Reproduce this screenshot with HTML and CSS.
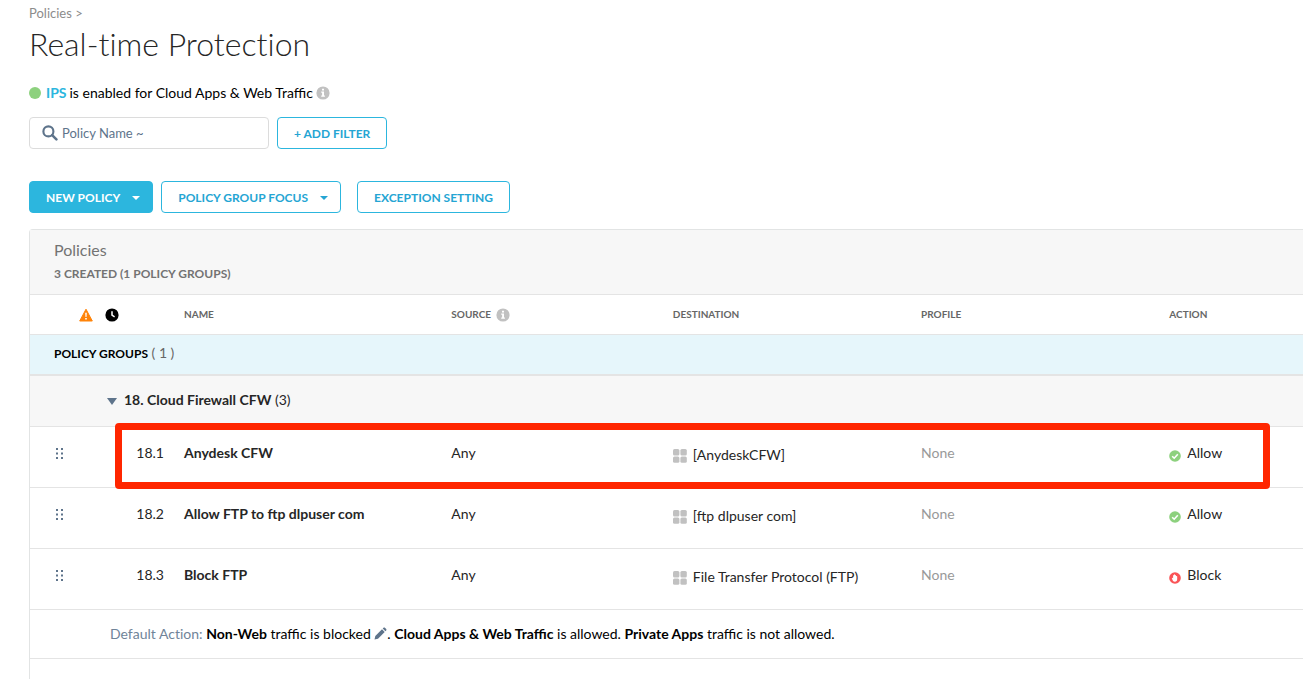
FILE: index.html
```html
<!DOCTYPE html>
<html lang="en">
<head>
<meta charset="utf-8">
<title>Real-time Protection</title>
<link rel="stylesheet" href="styles.css">
</head>
<body>
<svg class="sprite" aria-hidden="true">
  <symbol id="info" viewBox="0 0 14 14"><circle cx="7" cy="7" r="6.6" fill="#c1c1c1"/><path d="M6 2.8h2v1.8H6zM5.2 5.6H8v4h.9v1.2H5.2V9.6h.9V6.8h-.9z" fill="#fff"/></symbol>
  <symbol id="apps" viewBox="0 0 14 14"><g fill="#c1c1c1"><rect width="6.4" height="6.4" rx="1.5"/><rect x="7.4" width="6.4" height="6.4" rx="1.5"/><rect y="7.4" width="6.4" height="6.4" rx="1.5"/><rect x="7.4" y="7.4" width="6.4" height="6.4" rx="1.5"/></g></symbol>
  <symbol id="allow" viewBox="0 0 12 12"><circle cx="6" cy="6" r="5.8" fill="#8dd17e"/><path d="M3.2 6.2l2 2 3.6-4" fill="none" stroke="#fff" stroke-width="1.6"/></symbol>
  <symbol id="block" viewBox="0 0 12 12"><circle cx="6" cy="6" r="5.8" fill="#fa5457"/><path d="M2.800 6c.5-.4 1-.1 1.300.5V3.600c0-.7.8-.7.9 0v-.8c0-.7 1-.7 1 0v.6c.1-.6.9-.6 1 .1v.8c.2-.6 1.200-.5 1.200.1V7c0 1.700-.8 2.800-2.300 2.800S3.600 8.900 2.800 6z" fill="#fff"/></symbol>
  <symbol id="grip" viewBox="0 0 8 11"><g fill="#5e748b"><rect width="2" height="2"/><rect x="5" width="2" height="2"/><rect y="4.500" width="2" height="2"/><rect x="5" y="4.500" width="2" height="2"/><rect y="9" width="2" height="2"/><rect x="5" y="9" width="2" height="2"/></g></symbol>
</svg>
<main class="page">
  <nav class="crumbs"><a href="#">Policies</a> &gt;</nav>
  <h1 class="title">Real-time Protection</h1>
  <p class="status"><span class="dot"></span><a class="ips" href="#">IPS</a> <span>is enabled for Cloud Apps &amp; Web Traffic</span><svg class="icon14"><use href="#info"/></svg></p>
  <div class="filters">
    <label class="search">
      <svg class="search-icon" viewBox="0 0 15 15"><circle cx="6" cy="6" r="4.700" fill="none" stroke="#5e748b" stroke-width="2"/><path d="M9.500 9.500l4 4" stroke="#5e748b" stroke-width="2.400" stroke-linecap="round"/></svg>
      <input type="text" placeholder="Policy Name ~" aria-label="Policy Name">
    </label>
    <button class="btn" type="button">+ ADD FILTER</button>
  </div>
  <div class="actions">
    <button class="btn menu primary" type="button">NEW POLICY<span class="caret"></span></button>
    <button class="btn menu" type="button">POLICY GROUP FOCUS<span class="caret"></span></button>
    <button class="btn exception" type="button">EXCEPTION SETTING</button>
  </div>
  <section class="panel">
    <header class="panel-head">
      <h2>Policies</h2>
      <p>3 CREATED (1 POLICY GROUPS)</p>
    </header>
    <table class="policies">
      <colgroup><col class="c-edge"><col class="c-icon"><col class="c-icon"><col class="c-icon"><col class="c-num"><col class="c-name"><col class="c-source"><col class="c-dest"><col class="c-profile"><col></colgroup>
      <thead>
        <tr>
          <th></th><th></th>
          <th class="tight"><svg class="icon14" viewBox="0 0 14 14" role="img" aria-label="Warnings"><path d="M7 1.200L13.300 13H.7z" fill="#ff8308" stroke="#ff8308" stroke-linejoin="round"/><path d="M6.200 4.800h1.600L7.500 9h-1zM6.200 10h1.600v1.500H6.200z" fill="#fff"/></svg></th>
          <th class="tight"><svg class="icon14" viewBox="0 0 14 14" role="img" aria-label="Schedule"><circle cx="7" cy="7" r="6.600"/><path d="M7 3.200V7.200l2.600 1.600" fill="none" stroke="#fff" stroke-width="1.500"/></svg></th>
          <th></th>
          <th>NAME</th><th>SOURCE<svg class="icon14 source-info"><use href="#info"/></svg></th><th>DESTINATION</th><th>PROFILE</th><th>ACTION</th>
        </tr>
      </thead>
      <tbody>
        <tr class="groups"><td colspan="10"><strong>POLICY GROUPS</strong> <span class="count">( 1 )</span></td></tr>
        <tr class="group"><td colspan="10"><button class="toggle" type="button" aria-label="Collapse group"></button><strong>18. Cloud Firewall CFW</strong> (3)</td></tr>
        <tr class="rule"><td></td><td class="grip"><svg><use href="#grip"/></svg></td><td></td><td></td><td class="num">18.1<span class="marker"></span></td><td class="name">Anydesk CFW</td><td>Any</td><td class="dest"><svg class="icon14"><use href="#apps"/></svg>[AnydeskCFW]</td><td class="none">None</td><td class="action"><svg><use href="#allow"/></svg>Allow</td></tr>
        <tr class="rule"><td></td><td class="grip"><svg><use href="#grip"/></svg></td><td></td><td></td><td class="num">18.2</td><td class="name">Allow FTP to ftp dlpuser com</td><td>Any</td><td class="dest"><svg class="icon14"><use href="#apps"/></svg>[ftp dlpuser com]</td><td class="none">None</td><td class="action"><svg><use href="#allow"/></svg>Allow</td></tr>
        <tr class="rule"><td></td><td class="grip"><svg><use href="#grip"/></svg></td><td></td><td></td><td class="num">18.3</td><td class="name">Block FTP</td><td>Any</td><td class="dest"><svg class="icon14"><use href="#apps"/></svg>File Transfer Protocol (FTP)</td><td class="none">None</td><td class="action"><svg><use href="#block"/></svg>Block</td></tr>
      </tbody>
    </table>
    <p class="default"><span class="muted">Default Action:</span> <strong>Non-Web</strong> traffic is blocked <svg viewBox="0 0 13 13" role="img" aria-label="Edit"><path d="M.5 12.500l.8-3.500L8 2.300l2.700 2.700L4 11.700zM8.700 1.600l.8-.8c.5-.5 1-.4 1.400 0l1.300 1.300c.4.400.4.900 0 1.300l-.8.900z" fill="#5e748b"/></svg>. <strong>Cloud Apps &amp; Web Traffic</strong> is allowed. <strong>Private Apps</strong> traffic is not allowed.</p>
  </section>
</main>
</body>
</html>
```
FILE: styles.css
```css
* { box-sizing: border-box; }
html, body { height: 100%; }
body {
  margin: 0;
  background: #fff;
  color: #262626;
  font: 14px/20px Lato, "Liberation Sans", sans-serif;
}
h1, h2, p { margin: 0; }
strong { font-weight: 700; }
button, input { font: inherit; }
.sprite { position: absolute; width: 0; height: 0; }
.icon14 { width: 14px; height: 14px; flex: none; }

.page {
  display: flex;
  flex-direction: column;
  min-height: 100%;
  padding: 3px 0 0 29px;
}
.crumbs { font-size: 13px; color: #8c8c8c; }
.crumbs a { color: inherit; text-decoration: none; }
.title { font-size: 32px; line-height: 42px; font-weight: 300; font-variant-ligatures: none; }
.status { display: flex; align-items: center; gap: 3px; margin-top: 18px; color: #000; }
.dot { width: 12px; height: 12px; margin-right: 2px; border-radius: 50%; background: #8dd17e; }
.ips { color: #2cb6de; font-weight: 700; text-decoration: none; }

.filters { display: flex; gap: 8px; margin-top: 14px; }
.search {
  display: flex;
  align-items: center;
  gap: 4px;
  width: 240px;
  height: 32px;
  padding: 0 12px;
  border: 1px solid #dcdcdc;
  border-radius: 4px;
}
.search-icon { width: 16px; height: 16px; flex: none; }
.search input { width: 100%; padding: 0; border: 0; outline: 0; background: none; font-size: 13px; }
.search input::placeholder { color: #5e748b; opacity: 1; }
.btn {
  display: flex;
  align-items: center;
  height: 32px;
  padding: 1px 16px 0;
  border: 1px solid #2cb6de;
  border-radius: 4px;
  background: #fff;
  color: #25a5d3;
  font-size: 12px;
  font-weight: 700;
  white-space: nowrap;
}
.menu { padding-right: 12px; }
.primary { background: #2cb6de; color: #fff; }
.caret { margin-left: 12px; border: 4px solid transparent; border-top-color: currentColor; border-bottom: 0; }
.actions { display: flex; gap: 8px; margin-top: 32px; }
.exception { margin-left: 8px; }

.panel {
  flex: 1;
  margin-top: 16px;
  border: 1px solid #e2e4e4;
  border-width: 1px 0 0 1px;
  border-top-left-radius: 4px;
}
.panel-head { padding: 9px 24px; background: #f7f7f7; border-bottom: 1px solid #e4e4e4; color: #737373; }
.panel-head h2 { margin-bottom: 2px; font-size: 16px; line-height: 22px; font-weight: 400; }
.panel-head p { font-size: 12px; line-height: 22px; font-weight: 700; }

.policies { width: 100%; table-layout: fixed; border-collapse: separate; border-spacing: 0; }
.c-edge { width: 17px; }
.c-icon { width: 26px; }
.c-num { width: 51px; }
.c-name { width: 21%; }
.c-source { width: 17.4%; }
.c-dest, .c-profile { width: 19.5%; }
.policies th, .policies td { padding: 0 8px; border-bottom: 1px solid #e4e4e4; text-align: left; white-space: nowrap; }
.policies th { height: 40px; padding-bottom: 2px; color: #666; font-size: 10px; font-weight: 700; }
.policies th.tight { padding: 0 6px 2px; }
.policies th svg { vertical-align: middle; }
.source-info { margin-left: 5px; }
.policies .groups td { height: 41px; padding: 0 24px 2px; background: #e6f6fb; border-bottom-width: 2px; color: #666; }
.groups strong { color: #000; font-size: 12px; }
.policies .group td { height: 51px; padding: 0 77px 2px; background: #f7f7f7; }
.toggle {
  width: 10px;
  height: 7px;
  margin: 0 7px 0 0;
  padding: 0;
  border: 0;
  background: #5e748b;
  clip-path: polygon(0 0, 100% 0, 50% 100%);
}
.rule { position: relative; }
.policies .rule td { height: 61px; padding-bottom: 8px; }
.policies td.num { padding-right: 12px; text-align: right; }
.name { font-weight: 700; }
.policies .rule td.dest { padding-bottom: 4px; }
.dest svg { margin-right: 6px; vertical-align: middle; }
.none { color: #999; }
.policies td.grip { padding-left: 9px; }
.grip svg { display: block; width: 8px; height: 11px; }
.action svg { width: 12px; height: 12px; margin-right: 6px; vertical-align: -4px; }
.marker {
  position: absolute;
  z-index: 1;
  inset: -4px 33px -1px 85px;
  border: 7px solid #ff2600;
  border-radius: 4px;
  pointer-events: none;
}
.default { padding: 14px 80px; border-bottom: 1px solid #e4e4e4; color: #000; }
.default .muted { color: #708499; font-variant-ligatures: none; }
.default svg { width: 13px; height: 13px; vertical-align: -1px; }
```
